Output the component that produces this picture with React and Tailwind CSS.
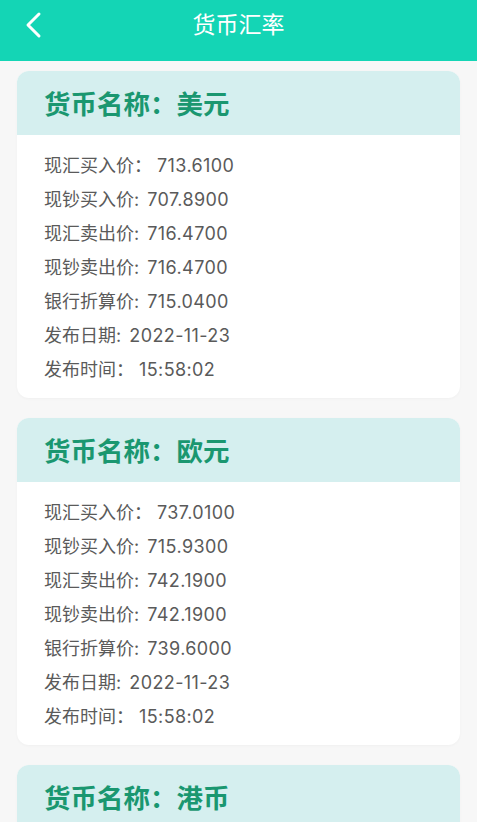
import React from 'react';

// 页面里第一行和最后一行用的是全角冒号，其余行是半角
const rates = [
  {
    name: '美元',
    rows: [
      ['现汇买入价', '713.6100', true],
      ['现钞买入价', '707.8900'],
      ['现汇卖出价', '716.4700'],
      ['现钞卖出价', '716.4700'],
      ['银行折算价', '715.0400'],
      ['发布日期', '2022-11-23'],
      ['发布时间', '15:58:02', true],
    ],
  },
  {
    name: '欧元',
    rows: [
      ['现汇买入价', '737.0100', true],
      ['现钞买入价', '715.9300'],
      ['现汇卖出价', '742.1900'],
      ['现钞卖出价', '742.1900'],
      ['银行折算价', '739.6000'],
      ['发布日期', '2022-11-23'],
      ['发布时间', '15:58:02', true],
    ],
  },
  {
    name: '港币',
    rows: [
      ['现汇买入价', '90.9600', true],
      ['现钞买入价', '90.2400'],
    ],
  },
];

const font = { fontFamily: 'Inter, "Noto Sans CJK SC", sans-serif' };

const RateCard = ({ item }) => (
  <div className="bg-white rounded-xl overflow-hidden shadow-[0_1px_3px_rgba(0,0,0,0.03)]">
    <div className="bg-[#d5efef] h-[64px] flex items-center px-[27px] pt-[3px]">
      <h2 className="text-[26.5px] font-semibold text-[#1a9770] leading-none">货币名称：{item.name}</h2>
    </div>
    <div className="px-[27px] pt-[13px] pb-[12px]">
      {item.rows.map(([label, value, wide]) => (
        <div key={label} className="h-[34px] flex items-center text-[18px] text-[#5a5a5a] whitespace-pre">
          <span>{wide ? `${label}：` : `${label}: `}</span>
          <span className={`tracking-[0.4px] ${wide ? 'ml-[5px]' : 'ml-[3px]'}`}>{value}</span>
        </div>
      ))}
    </div>
  </div>
);

const App = () => {
  return (
    <div className="w-[477px] h-[822px] overflow-hidden bg-[#f7f7f7]" style={font}>
      <div className="h-[61px] bg-[#14d5b5] flex items-center relative">
        <svg className="absolute left-[24px] top-[11px]" width="18" height="28" viewBox="0 0 18 28" fill="none">
          <path d="M15 3 L4 14 L15 25" stroke="white" strokeWidth="3" strokeLinecap="round" strokeLinejoin="round" />
        </svg>
        <h1 className="w-full text-center text-white text-[23px] -mt-[10px]">货币汇率</h1>
      </div>
      <div className="px-[17px] pt-[10px] flex flex-col gap-[20px]">
        {rates.map((item) => (
          <RateCard key={item.name} item={item} />
        ))}
      </div>
    </div>
  );
};

export default App;
